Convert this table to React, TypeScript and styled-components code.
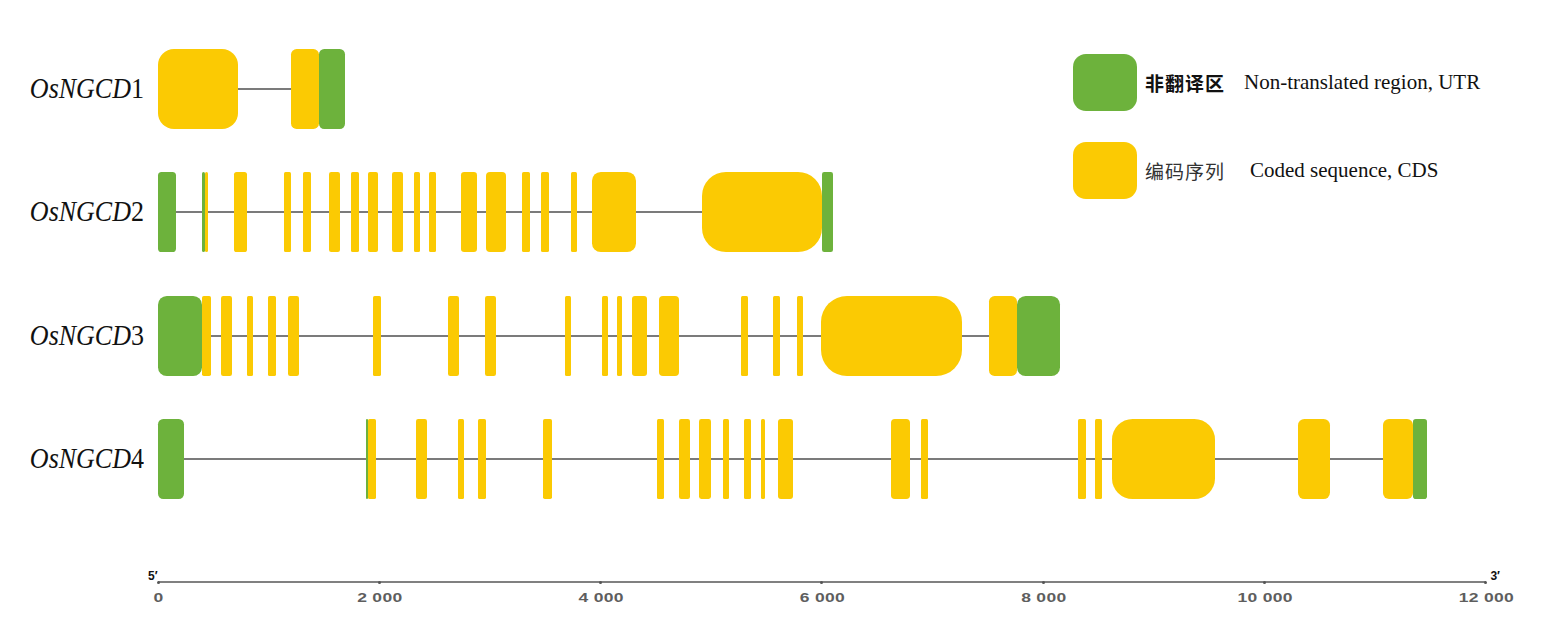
import React from 'react';
import styled, { createGlobalStyle } from 'styled-components';

const YELLOW = '#fbca03';
const GREEN = '#6db23c';
const ORIGIN = 158;

type Exon = [number, number, 'Y' | 'G'];

type Gene = { id: number; exons: Exon[] };

// x positions are page pixels, from the reference
const genes: Gene[] = [
    {
        id: 1,
        exons: [[158, 238, 'Y'], [291, 319, 'Y'], [319, 345, 'G']],
    },
    {
        id: 2,
        exons: [
            [158, 176, 'G'], [202, 205, 'G'], [205, 208, 'Y'], [234, 247, 'Y'], [284, 291, 'Y'],
            [303, 311, 'Y'], [329, 340, 'Y'], [351, 359, 'Y'], [368, 378, 'Y'], [392, 403, 'Y'],
            [414, 420, 'Y'], [429, 436, 'Y'], [461, 477, 'Y'], [486, 506, 'Y'], [522, 530, 'Y'],
            [541, 549, 'Y'], [571, 577, 'Y'], [592, 636, 'Y'], [702, 822, 'Y'], [822, 833, 'G'],
        ],
    },
    {
        id: 3,
        exons: [
            [158, 202, 'G'], [202, 211, 'Y'], [221, 232, 'Y'], [247, 253, 'Y'], [268, 276, 'Y'],
            [288, 299, 'Y'], [373, 381, 'Y'], [448, 459, 'Y'], [485, 496, 'Y'], [565, 571, 'Y'],
            [602, 608, 'Y'], [617, 622, 'Y'], [632, 647, 'Y'], [659, 679, 'Y'], [741, 748, 'Y'],
            [773, 780, 'Y'], [797, 803, 'Y'], [821, 962, 'Y'], [989, 1017, 'Y'], [1017, 1060, 'G'],
        ],
    },
    {
        id: 4,
        exons: [
            [158, 184, 'G'], [366, 368, 'G'], [368, 376, 'Y'], [416, 427, 'Y'], [458, 464, 'Y'],
            [478, 486, 'Y'], [543, 552, 'Y'], [657, 664, 'Y'], [679, 690, 'Y'], [699, 711, 'Y'],
            [723, 729, 'Y'], [744, 751, 'Y'], [761, 765, 'Y'], [778, 793, 'Y'], [891, 910, 'Y'],
            [921, 928, 'Y'], [1078, 1086, 'Y'], [1095, 1102, 'Y'], [1112, 1215, 'Y'], [1298, 1330, 'Y'],
            [1383, 1413, 'Y'], [1413, 1427, 'G'],
        ],
    },
];

const ticks = ['0', '2 000', '4 000', '6 000', '8 000', '10 000', '12 000'];

const GlobalStyle = createGlobalStyle`
    html, body {
        margin: 0;
        padding: 0;
        background: #fff;
    }
`;

const Page = styled.div`
    width: 1543px;
    height: 631px;
    position: relative;
    overflow: hidden;
    background: #fff;
    padding-top: 49px;
    box-sizing: border-box;
`;

const Rows = styled.div`
    display: flex;
    flex-direction: column;
    gap: 43.4px;
`;

const Row = styled.div`
    display: flex;
    align-items: center;
    height: 80px;
`;

const Label = styled.div`
    width: ${ORIGIN}px;
    box-sizing: border-box;
    padding-right: 14px;
    text-align: right;
    font-family: "Liberation Serif", "Times New Roman", serif;
    font-size: 26px;
    color: #111;
    line-height: 1;
    transform: scaleY(1.1);
    i {
        font-style: italic;
    }
`;

const Track = styled.div`
    position: relative;
    flex: 1;
    height: 80px;
`;

const Intron = styled.div`
    position: absolute;
    top: 39px;
    height: 2px;
    background: #7b7b7b;
`;

const Block = styled.div<{ $kind: 'Y' | 'G' }>`
    position: absolute;
    top: 0;
    height: 80px;
    background: ${p => (p.$kind === 'G' ? GREEN : YELLOW)};
`;

const Legend = styled.div`
    position: absolute;
    left: 1073px;
    top: 54px;
    display: flex;
    flex-direction: column;
    gap: 31px;
`;

const LegendItem = styled.div`
    display: flex;
    align-items: center;
`;

const Swatch = styled.div<{ $kind: 'Y' | 'G' }>`
    width: 64px;
    height: 57px;
    border-radius: 13px;
    background: ${p => (p.$kind === 'G' ? GREEN : YELLOW)};
    margin-right: 8px;
`;

const ChineseName = styled.span<{ $bold?: boolean }>`
    font-family: "Noto Sans CJK SC", "Noto Sans", sans-serif;
    font-size: 19px;
    font-weight: ${p => (p.$bold ? 700 : 400)};
    color: ${p => (p.$bold ? '#111' : '#333')};
    letter-spacing: 1px;
`;

const EnglishName = styled.span<{ $offset: number }>`
    font-family: "Liberation Serif", "Times New Roman", serif;
    font-size: 21px;
    color: #111;
    margin-left: ${p => p.$offset}px;
`;

const Axis = styled.div`
    position: relative;
    margin-left: ${ORIGIN}px;
    margin-top: 82px;
    width: 1328px;
`;

const AxisLine = styled.div`
    height: 2px;
    background: #808080;
`;

const EndMark = styled.span<{ $side: 'left' | 'right' }>`
    position: absolute;
    top: -11px;
    ${p => (p.$side === 'left' ? 'left: -10px;' : 'right: -14px;')}
    font-family: "Liberation Sans", Arial, sans-serif;
    font-weight: bold;
    font-size: 12px;
    line-height: 1;
    color: #111;
`;

const TickRow = styled.div`
    display: flex;
    justify-content: space-between;
    margin: -2px -40px 0;
`;

const Tick = styled.div`
    width: 80px;
    display: flex;
    flex-direction: column;
    align-items: center;
`;

const TickDot = styled.div`
    width: 3px;
    height: 3px;
    border-radius: 50%;
    background: #555;
`;

const TickLabel = styled.span`
    margin-top: 5px;
    padding-left: 1px;
    font-family: "Liberation Sans", Arial, sans-serif;
    font-weight: bold;
    font-size: 17.5px;
    letter-spacing: 0.3px;
    line-height: 1;
    color: #5e5e5e;
    transform: scaleY(0.76);
`;

const radiusFor = (w: number) => Math.max(1.5, Math.min(26, w * 0.2));

const GeneRow = ({ gene }: { gene: Gene }) => {
    const start = Math.min(...gene.exons.map(e => e[0]));
    const end = Math.max(...gene.exons.map(e => e[1]));
    return (
        <Row>
            <Label>
                <i>OsNGCD</i>{gene.id}
            </Label>
            <Track>
                <Intron style={{ left: start - ORIGIN, width: end - start }} />
                {gene.exons.map(([a, b, kind], i) => (
                    <Block
                        key={i}
                        $kind={kind}
                        style={{ left: a - ORIGIN, width: b - a, borderRadius: radiusFor(b - a) }}
                    />
                ))}
            </Track>
        </Row>
    );
};

export default function App() {
    return (
        <>
            <GlobalStyle />
            <Page>
                <Rows>
                    {genes.map(g => (
                        <GeneRow key={g.id} gene={g} />
                    ))}
                </Rows>

                <Legend>
                    <LegendItem>
                        <Swatch $kind="G" />
                        <ChineseName $bold>非翻译区</ChineseName>
                        <EnglishName $offset={19}>Non-translated region, UTR</EnglishName>
                    </LegendItem>
                    <LegendItem>
                        <Swatch $kind="Y" />
                        <ChineseName>编码序列</ChineseName>
                        <EnglishName $offset={25}>Coded sequence, CDS</EnglishName>
                    </LegendItem>
                </Legend>

                <Axis>
                    <AxisLine />
                    <EndMark $side="left">5′</EndMark>
                    <EndMark $side="right">3′</EndMark>
                    <TickRow>
                        {ticks.map(t => (
                            <Tick key={t}>
                                <TickDot />
                                <TickLabel>{t}</TickLabel>
                            </Tick>
                        ))}
                    </TickRow>
                </Axis>
            </Page>
        </>
    );
}
